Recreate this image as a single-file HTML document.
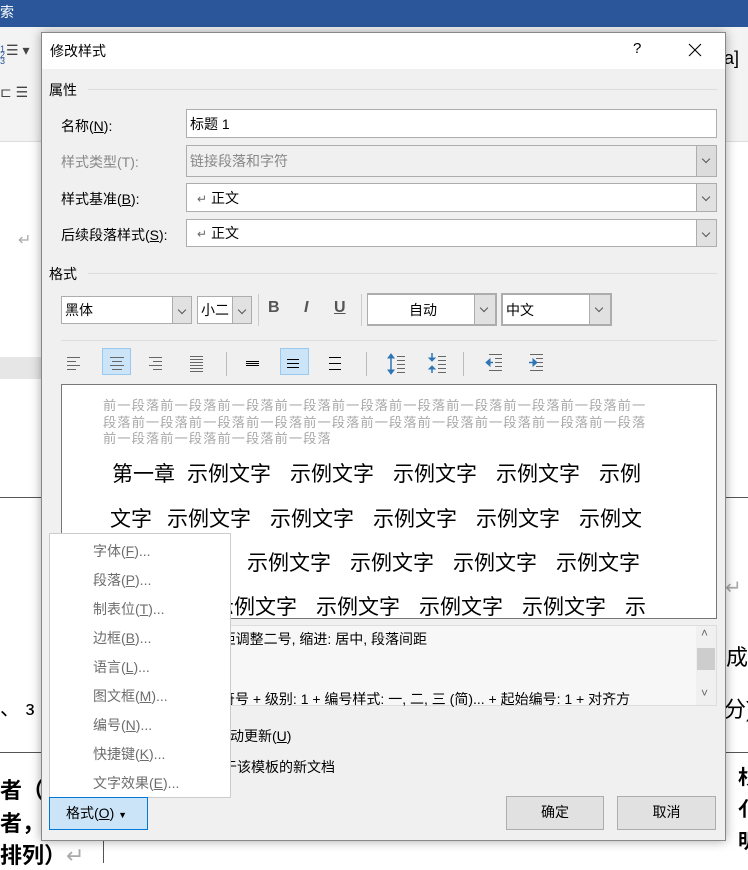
<!DOCTYPE html>
<html><head><meta charset="utf-8"><style>
*{margin:0;padding:0;box-sizing:border-box}
body{width:748px;height:863px;overflow:hidden;background:#fff;position:relative;font-family:"Liberation Sans","Noto Sans CJK SC",sans-serif;font-size:14px;color:#000}
.a{position:absolute;white-space:nowrap}
.inp{position:absolute;background:#fff;border:1px solid #adadad;height:30px;font-size:14px;line-height:28px;padding-left:3px}
.dd{position:absolute;right:0;top:0;bottom:0;width:20px;background:#e1e1e1;border-left:1px solid #adadad}
.dd:after{content:"";position:absolute;left:6px;top:10px;width:5px;height:5px;border-right:1px solid #555;border-bottom:1px solid #555;transform:rotate(45deg)}
.dis{background:#f0f0f0;color:#888}
.ic{position:absolute}
.sel{position:absolute;background:#cce4f7;border:1px solid #99c9ef}
.big span{position:absolute;font-size:21px;white-space:nowrap}
.mi{position:absolute;left:43px;color:#6d6d6d;font-size:14px}
.btn{position:absolute;background:#e1e1e1;border:1px solid #adadad;text-align:center;line-height:31px;font-size:14px}
u{text-decoration:underline}
</style></head><body>
<div class="a" style="left:0;top:0;width:748px;height:27px;background:#2b579a"></div>
<div class="a" style="left:0;top:2px;color:#fff;font-size:14px">索</div>
<div class="a" style="left:0;top:27px;width:748px;height:115px;background:#f3f3f3;border-bottom:1px solid #ddd"></div>
<div class="a" style="left:0;top:46px;font-size:9px;color:#2b579a;line-height:6px">1<br>2<br>3</div>
<div class="a" style="left:6px;top:42px;font-size:14px;color:#444">☰ ▾</div>
<div class="a" style="left:0;top:84px;font-size:14px;color:#444">⊏ ☰</div>
<div class="a" style="left:724px;top:48px;font-size:18px">a]</div>
<div class="a" style="left:18px;top:230px;font-size:16px;color:#aaa">↵</div>
<div class="a" style="left:0;top:357px;width:41px;height:22px;background:#e6e6e6"></div>
<div class="a" style="left:0;top:497px;width:748px;height:1px;background:#555"></div>
<div class="a" style="left:0;top:752px;width:748px;height:1px;background:#555"></div>
<div class="a" style="left:725px;top:575px;font-size:20px;color:#aaa">↵</div>
<div class="a" style="left:726px;top:640px;font-size:22px">成</div>
<div class="a" style="left:724px;top:692px;font-size:22px">分)</div>
<div class="a" style="left:0;top:692px;font-size:20px">、 з</div>
<div class="a" style="left:0;top:773px;font-size:22px;font-weight:bold">者（</div>
<div class="a" style="left:0;top:806px;font-size:22px;font-weight:bold">者，</div>
<div class="a" style="left:0;top:838px;font-size:22px;font-weight:bold">排列）<span style="color:#aaa;font-weight:normal">↵</span></div>
<div class="a" style="left:103px;top:840px;width:1px;height:23px;background:#555"></div>
<div class="a" style="left:738px;top:762px;font-size:20px;font-weight:bold;line-height:32px">杉<br>亻<br>明</div>

<!-- dialog -->
<div class="a" style="left:41px;top:32px;width:685px;height:809px;background:#f0f0f0;border:1px solid #888;box-shadow:0 0 10px rgba(0,0,0,.35)"></div>
<div class="a" style="left:42px;top:33px;width:683px;height:36px;background:#fff"></div>
<div class="a" style="left:50px;top:41px;font-size:14px">修改样式</div>
<div class="a" style="left:633px;top:40px;font-size:15px">?</div>
<svg class="ic" style="left:688px;top:43px" width="14" height="14"><path d="M1 1L13 13M13 1L1 13" stroke="#000" stroke-width="1.1"/></svg>

<div class="a" style="left:49px;top:80px;font-size:14px">属性</div>
<div class="a" style="left:88px;top:89px;width:630px;height:1px;background:#ddd"></div>
<div class="a" style="left:61px;top:116px">名称(<u>N</u>):</div>
<div class="inp" style="left:186px;top:109px;width:531px;height:29px">标题 1</div>
<div class="a" style="left:61px;top:152px;color:#888">样式类型(T):</div>
<div class="inp dis" style="left:186px;top:145px;width:531px;height:32px;line-height:30px">链接段落和字符<div class="dd" style="background:#dcdcdc"></div></div>
<div class="a" style="left:61px;top:189px">样式基准(<u>B</u>):</div>
<div class="inp" style="left:186px;top:183px;width:531px;height:29px;padding-left:10px"><span style="color:#666;font-size:12px">↵</span> 正文<div class="dd"></div></div>
<div class="a" style="left:61px;top:225px">后续段落样式(<u>S</u>):</div>
<div class="inp" style="left:186px;top:219px;width:531px;height:28px;line-height:26px;padding-left:10px"><span style="color:#666;font-size:12px">↵</span> 正文<div class="dd"></div></div>

<div class="a" style="left:49px;top:264px">格式</div>
<div class="a" style="left:88px;top:273px;width:630px;height:1px;background:#ddd"></div>

<div class="inp" style="left:61px;top:296px;width:131px;height:28px;line-height:26px">黑体<div class="dd" style="width:19px"></div></div>
<div class="inp" style="left:197px;top:296px;width:55px;height:28px;line-height:26px">小二<div class="dd" style="width:19px"></div></div>
<div class="a" style="left:258px;top:294px;width:1px;height:32px;background:#ccc"></div>
<div class="a" style="left:268px;top:299px;font-weight:bold;color:#555;font-size:16px">B</div>
<div class="a" style="left:304px;top:299px;font-style:italic;font-weight:bold;color:#555;font-size:16px">I</div>
<div class="a" style="left:334px;top:299px;font-weight:bold;color:#555;text-decoration:underline;font-size:16px">U</div>
<div class="a" style="left:361px;top:294px;width:1px;height:32px;background:#ccc"></div>
<div class="inp" style="left:367px;top:293px;width:130px;height:33px;line-height:31px;text-align:center;padding-right:20px;border-width:2px 2px 2px 1px">自动<div class="dd" style="width:21px"></div></div>
<div class="inp" style="left:501px;top:293px;width:111px;height:33px;line-height:31px;border-width:2px">中文<div class="dd" style="width:21px"></div></div>
<div class="a" style="left:61px;top:340px;width:656px;height:1px;background:#ddd"></div>

<div class="sel" style="left:102px;top:348px;width:29px;height:27px"></div>
<div class="sel" style="left:280px;top:348px;width:29px;height:27px"></div>
<svg class="ic" style="left:60px;top:348px" width="500" height="30" stroke-width="1">
<g stroke="#666">
<path d="M7 9.5h13M7 13.5h9M7 17.5h13M7 21.5h9"/>
<path d="M50 9.5h14M52 13.5h10M50 17.5h14M52 21.5h10"/>
<path d="M89 9.5h13M93 13.5h9M89 17.5h13M93 21.5h9"/>
<path d="M130 8.5h13M130 11.5h13M130 14.5h13M130 17.5h13M130 20.5h13M130 23.5h13"/>
</g>
<g stroke="#000">
<path d="M186 13.5h13M186 15.5h13M186 17.5h13"/>
<path d="M227 11.5h12M227 15.5h12M227 19.5h12"/>
<path d="M269 9.5h12M269 15.5h12M269 21.5h12"/>
</g>
<path d="M166.5 4v24M306.5 4v24M403.5 4v24" stroke="#bbb"/>
<g stroke="#666"><path d="M337 8.5h8M337 12.5h8M337 16.5h8M337 20.5h8M337 24.5h8"/>
<path d="M378 8.5h8M378 12.5h8M378 16.5h8M378 20.5h8M378 24.5h8"/>
<path d="M429 6.5h13M435 10.5h7M435 14.5h7M435 18.5h7M429 22.5h13"/>
<path d="M470 6.5h13M476 10.5h7M476 14.5h7M476 18.5h7M470 22.5h13"/></g>
<g fill="#2e75b6" stroke="#2e75b6">
<path d="M331 8v16" stroke-width="1.5"/><path d="M328 10l3-4 3 4zM328 22l3 4 3-4z"/>
<path d="M372 5v6M372 19v6" stroke-width="1.5"/><path d="M369 10l3 3 3-3zM369 21l3-3 3 3z"/>
<path d="M433 14.5h-6" stroke-width="1.5"/><path d="M430 11l-4 3.5 4 3.5z"/>
<path d="M469 14.5h6" stroke-width="1.5"/><path d="M473 11l4 3.5-4 3.5z"/>
</g>
</svg>

<div class="a" style="left:61px;top:384px;width:656px;height:235px;background:#fff;border:1px solid #777"></div>
<div class="a" style="left:103px;top:398px;font-size:13.3px;letter-spacing:1px;line-height:16.5px;color:#a8a8a8">前一段落前一段落前一段落前一段落前一段落前一段落前一段落前一段落前一段落前一<br>段落前一段落前一段落前一段落前一段落前一段落前一段落前一段落前一段落前一段落<br>前一段落前一段落前一段落前一段落</div>
<div class="big">
<span style="left:112px;top:458px">第一章</span><span style="left:187px;top:458px">示例文字</span><span style="left:290px;top:458px">示例文字</span><span style="left:393px;top:458px">示例文字</span><span style="left:496px;top:458px">示例文字</span><span style="left:599px;top:458px">示例</span>
<span style="left:110px;top:503px">文字</span><span style="left:167px;top:503px">示例文字</span><span style="left:270px;top:503px">示例文字</span><span style="left:373px;top:503px">示例文字</span><span style="left:476px;top:503px">示例文字</span><span style="left:579px;top:503px">示例文</span>
<span style="left:144px;top:547px">示例文字</span><span style="left:247px;top:547px">示例文字</span><span style="left:350px;top:547px">示例文字</span><span style="left:453px;top:547px">示例文字</span><span style="left:556px;top:547px">示例文字</span>
<span style="left:213px;top:591px">示例文字</span><span style="left:316px;top:591px">示例文字</span><span style="left:419px;top:591px">示例文字</span><span style="left:522px;top:591px">示例文字</span><span style="left:625px;top:591px">示</span>
</div>

<div class="a" style="left:61px;top:625px;width:656px;height:81px;background:#f7f7f7;border:1px solid #ddd"></div>
<div class="a" style="left:696px;top:626px;width:20px;height:79px;background:#f0f0f0"></div>
<div class="a" style="left:697px;top:648px;width:18px;height:22px;background:#cdcdcd"></div>
<div class="a" style="left:701px;top:626px;font-size:12px;color:#666">˄</div>
<div class="a" style="left:701px;top:686px;font-size:12px;color:#666">˅</div>
<div class="a" style="left:152px;top:629px;font-size:14px">标题 1 + 字距调整二号, 缩进: 居中, 段落间距</div>
<div class="a" style="left:149px;top:689px;font-size:14px">编号 + 多级符号 + 级别: 1 + 编号样式: 一, 二, 三 (简)... + 起始编号: 1 + 对齐方</div>
<div class="a" style="left:216px;top:726px">自动更新(<u>U</u>)</div>
<div class="a" style="left:209px;top:757px">基于该模板的新文档</div>

<div class="btn" style="left:506px;top:796px;width:98px;height:34px">确定</div>
<div class="btn" style="left:617px;top:796px;width:99px;height:34px">取消</div>

<!-- menu -->
<div class="a" style="left:49px;top:533px;width:182px;height:265px;background:#fff;border:1px solid #ccc">
<div class="mi" style="top:7px">字体(<u>F</u>)...</div>
<div class="mi" style="top:36px">段落(<u>P</u>)...</div>
<div class="mi" style="top:65px">制表位(<u>T</u>)...</div>
<div class="mi" style="top:94px">边框(<u>B</u>)...</div>
<div class="mi" style="top:123px">语言(<u>L</u>)...</div>
<div class="mi" style="top:152px">图文框(<u>M</u>)...</div>
<div class="mi" style="top:181px">编号(<u>N</u>)...</div>
<div class="mi" style="top:210px">快捷键(<u>K</u>)...</div>
<div class="mi" style="top:239px">文字效果(<u>E</u>)...</div>
</div>
<div class="a" style="left:49px;top:797px;width:99px;height:33px;background:#cce4f7;border:1px solid #0078d7;line-height:31px;padding-left:16px">格式(<u>O</u>) <span style="font-size:9px">▼</span></div>
</body></html>
